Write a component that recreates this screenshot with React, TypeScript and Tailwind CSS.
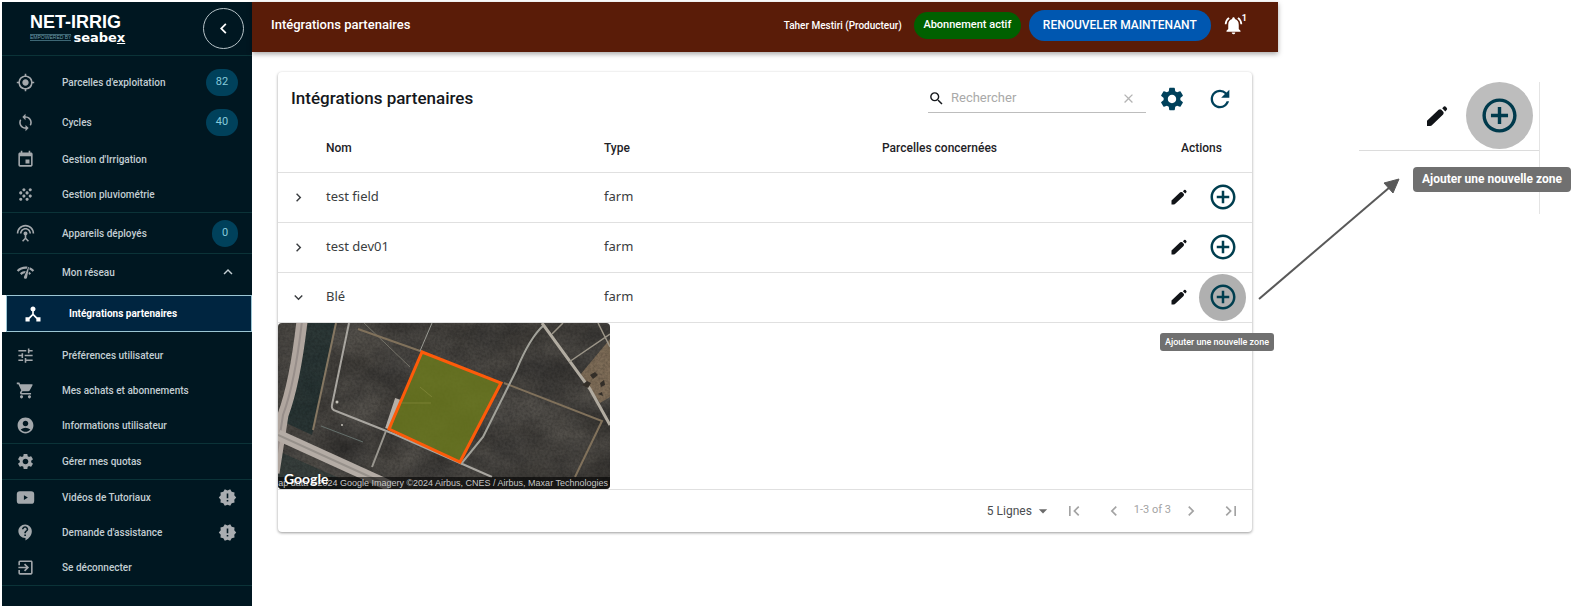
import type { ReactNode } from 'react';
import type { IconType } from 'react-icons';
import {
  MdGpsFixed, MdLoop, MdEvent, MdGrain, MdNetworkCheck, MdDeviceHub, MdTune, MdShoppingCart,
  MdAccountCircle, MdSettings, MdExitToApp, MdNewReleases, MdSearch, MdClose, MdRefresh,
  MdAddCircleOutline, MdChevronLeft, MdChevronRight, MdExpandMore, MdExpandLess, MdFirstPage,
  MdLastPage, MdArrowDropDown, MdNotificationsActive, MdContactSupport,
} from 'react-icons/md';

function AntennaIcon({ size = 20 }: { size?: number }) {
  return (
    <svg width={size} height={size} viewBox="0 0 24 24" fill="currentColor" aria-hidden="true">
      <path d="M12 5c-3.87 0-7 3.13-7 7h2c0-2.76 2.24-5 5-5s5 2.24 5 5h2c0-3.87-3.13-7-7-7zm1 9.29c.88-.39 1.5-1.26 1.5-2.29a2.5 2.5 0 0 0-5 0c0 1.02.62 1.9 1.5 2.29v3.3L7.59 21 9 22.41l3-3 3 3L16.41 21 13 17.59v-3.3zM12 1C5.93 1 1 5.93 1 12h2a9 9 0 0 1 18 0h2c0-6.07-4.93-11-11-11z" />
    </svg>
  );
}

function VideoIcon({ size = 20 }: { size?: number }) {
  return (
    <svg width={size} height={size} viewBox="0 0 24 24" fill="currentColor" fillRule="evenodd" aria-hidden="true">
      <path d="M5 4h14q4 0 4 4v8q0 4-4 4H5q-4 0-4-4V8q0-4 4-4zm5 5v6l5-3z" />
    </svg>
  );
}

function PencilIcon({ size }: { size: number }) {
  return (
    <svg width={size} height={size} viewBox="0 0 24 24" fill="#111418" aria-hidden="true">
      <path d="M2 22v-5.200L13.600 5.800q1.600-1.200 2.800 0l1.900 2q1 1.300-.2 2.800L7.400 20.800Q6.400 22 5 22zM17.200 4.200l1.700-1.600q1-.7 1.900.2l1 1.100q.8 1 0 1.800l-1.500 1.700z" />
    </svg>
  );
}

type Item = { label: string; icon: IconType | typeof AntennaIcon; badge?: string; extra?: ReactNode; height?: string };

const alertIcon = <MdNewReleases size={19} className="mr-[15px] text-[#a9adb1]" />;

const groups: Item[][] = [
  [
    { label: "Parcelles d'exploitation", icon: MdGpsFixed, badge: '82', height: 'h-10' },
    { label: 'Cycles', icon: MdLoop, badge: '40', height: 'h-10' },
    { label: "Gestion d'Irrigation", icon: MdEvent },
    { label: 'Gestion pluviométrie', icon: MdGrain },
  ],
  [{ label: 'Appareils déployés', icon: AntennaIcon, badge: '0', height: 'h-10' }],
];

const lowerGroups: Item[][] = [
  [
    { label: 'Préférences utilisateur', icon: MdTune },
    { label: 'Mes achats et abonnements', icon: MdShoppingCart },
    { label: 'Informations utilisateur', icon: MdAccountCircle },
  ],
  [{ label: 'Gérer mes quotas', icon: MdSettings }],
  [
    { label: 'Vidéos de Tutoriaux', icon: VideoIcon, extra: alertIcon },
    { label: "Demande d'assistance", icon: MdContactSupport, extra: alertIcon },
    { label: 'Se déconnecter', icon: MdExitToApp },
  ],
];

function NavItem({ item }: { item: Item }) {
  const Icon = item.icon;
  return (
    <li>
      <a href="#" className={`flex items-center pl-[14px] text-[10px] font-medium text-[#c3ced3] ${item.height ?? 'h-[35px]'}`}>
        <span className="w-[46px] text-[#a3a8ac]"><Icon size={19} /></span>
        <span className="flex-1">{item.label}</span>
        {item.badge && (
          <span className={`mr-[14px] flex h-[27px] items-center justify-center rounded-full bg-[#00415b] text-[11px] font-normal text-[#86cbdc] ${item.badge.length > 1 ? 'w-8' : 'w-[26px]'}`}>
            {item.badge}
          </span>
        )}
        {item.extra}
      </a>
    </li>
  );
}

function Sidebar() {
  return (
    <nav className="w-[250px] shrink-0 bg-[#001721]">
      <div className="flex h-[54px] items-center justify-between border-b border-[#0b3338] pr-2 pl-7">
        <div className="text-white">
          <div className="font-['Liberation_Sans',sans-serif] text-[18px] leading-[18px] font-bold">NET-IRRIG</div>
          <div className="flex items-center gap-[2px]">
            <span className="border-y border-[#3d6775] font-['Liberation_Sans',sans-serif] text-[5px] leading-[5px] whitespace-nowrap text-[#6f9dab]">EMPOWERED BY</span>
            <span className="font-['DejaVu_Sans',sans-serif] text-[13px] leading-[14px] font-bold">seabe<span className="underline">x</span></span>
          </div>
        </div>
        <button type="button" aria-label="Réduire le menu" className="flex size-[41px] items-center justify-center rounded-full border border-[#b7c3c8] text-white">
          <MdChevronLeft size={21} />
        </button>
      </div>
      <div className="pt-[6px]">
        {groups.map((g, i) => (
          <ul key={i} className="border-b border-[#0b3338]">
            {g.map((it) => <NavItem key={it.label} item={it} />)}
          </ul>
        ))}
        <button type="button" className="flex h-9 w-full items-center pr-[15px] pl-[14px] text-left text-[10px] font-medium text-[#c3ced3]">
          <span className="w-[46px] text-[#a3a8ac]"><MdNetworkCheck size={19} /></span>
          <span className="flex-1">Mon réseau</span>
          <MdExpandLess size={18} />
        </button>
        <div className="mt-[5px] mb-[6px] border-l-4 border-white">
          <a href="#" className="flex h-[37px] items-center border border-[#9cc6d4] bg-[#002540] pl-[16px] text-[10px] font-bold text-white">
            <span className="w-[46px]"><MdDeviceHub size={20} /></span>
            Intégrations partenaires
          </a>
        </div>
        {lowerGroups.map((g, i) => (
          <ul key={i} className="border-b border-[#0b3338]">
            {g.map((it) => <NavItem key={it.label} item={it} />)}
          </ul>
        ))}
      </div>
    </nav>
  );
}

function Header() {
  return (
    <header className="relative flex h-[50px] items-center bg-[#5a1c08] pr-[31px] pb-1 pl-[19px] text-white shadow-[0_2px_5px_rgba(0,0,0,0.35)]">
      <h1 className="flex-1 text-[13px] font-medium">Intégrations partenaires</h1>
      <span className="mr-3 text-[10px] font-medium">Taher Mestiri (Producteur)</span>
      <span className="mr-2 flex h-[27px] w-[107px] items-center justify-center rounded-full bg-[#006000] text-[11px] font-medium">Abonnement actif</span>
      <button type="button" className="mr-3 h-[31px] w-[182px] rounded-full bg-[#0057b0] text-[12px] font-medium">RENOUVELER MAINTENANT</button>
      <button type="button" aria-label="Notifications" className="flex items-end">
        <MdNotificationsActive size={21} />
        <span className="-ml-[2px] pb-[13px] text-[9px] leading-none font-bold">1</span>
      </button>
    </header>
  );
}

function FieldMap() {
  return (
    <figure className="relative w-[332px] overflow-hidden rounded">
      <svg viewBox="0 0 332 166" className="block h-[166px] w-full" role="img" aria-label="Vue satellite de la parcelle Blé">
        <defs>
          <filter id="ground" x="0" y="0" width="100%" height="100%" colorInterpolationFilters="sRGB">
            <feTurbulence type="fractalNoise" baseFrequency="0.02 0.03" numOctaves="6" seed="8" />
            <feColorMatrix values="0.16 0.1 0 0 0.14  0.15 0.1 0 0 0.135  0.13 0.1 0 0 0.13  0 0 0 0 1" />
          </filter>
          <filter id="grain" x="0" y="0" width="100%" height="100%" colorInterpolationFilters="sRGB">
            <feTurbulence type="fractalNoise" baseFrequency="0.4" numOctaves="2" seed="3" />
            <feColorMatrix values="0 0 0 0 0  0 0 0 0 0  0 0 0 0 0  0.6 0 0 0 -0.2" />
          </filter>
        </defs>
        <rect width="332" height="166" filter="url(#ground)" />
        <path d="M30 0h27L34 112 8 100z" fill="#142a2c" opacity=".6" />
        <path d="M0 128l86 38H0z" fill="#1d2f30" opacity=".5" />
        <path d="M332 16l-30 36 20 28 10-6z" fill="#8b765c" opacity=".8" />
        <rect width="332" height="166" filter="url(#grain)" opacity=".6" />
        <path d="M24-2Q17 60 5 92L-4 150" fill="none" stroke="#b0a69f" strokeWidth="11" />
        <path d="M24-2Q17 60 5 92L-4 150" fill="none" stroke="#978e8a" strokeWidth="2" />
        <path d="M0 112l112 51" fill="none" stroke="#b4aca5" strokeWidth="11" />
        <path d="M0 112l112 51" fill="none" stroke="#97918b" strokeWidth="2" />
        <path d="M58 0L35 107" stroke="#857762" strokeWidth="2" />
        <path d="M71 0L54 82q-1 5 4 6l58 23 98 43" fill="none" stroke="#a9a6a0" strokeWidth="2" />
        <path d="M86 0l46 44" stroke="#747269" strokeWidth="1" />
        <path d="M80 6l65 23M226 60l98 38-27 56" fill="none" stroke="#80715b" strokeWidth="2" />
        <path d="M154 0l-12 28" stroke="#999a93" strokeWidth="1" />
        <path d="M120 76l-10 30" fill="none" stroke="#b5afa8" strokeWidth="6" />
        <path d="M108 108l-14 36" fill="none" stroke="#9a9790" strokeWidth="2" />
        <path d="M266 2q-14 12-28 46l-33 66-22 27" fill="none" stroke="#a2a29a" strokeWidth="2" />
        <path d="M264 0l48 66 20 36" fill="none" stroke="#b2aca1" strokeWidth="3" />
        <path d="M274 11l11-11M291 39l41-28M320 0l12 24" fill="none" stroke="#9b9588" strokeWidth="1.500" />
        <g fill="#332e28"><path d="M304 62l5-4 4 2-3 5z" /><path d="M312 52l5-3 3 3-5 4zM322 60l4-3 1 5-4 2zM320 71l4-2 1 4z" /></g>
        <g fill="#c4c1b8"><circle cx="59" cy="79" r="1.500" /><circle cx="64" cy="102" r="1" /></g>
        <path d="M43 103l42 16" stroke="#65706c" strokeWidth="1" />
        <path d="M144 29l79 31-41 79-71-33z" fill="#6b7a1c" fillOpacity=".82" stroke="#fd5b0a" strokeWidth="3" />
        <path d="M123 80h30M142 64l12 10" stroke="#8b8e41" strokeWidth="1" opacity=".6" />
      </svg>
      <figcaption className="absolute inset-x-0 bottom-0 h-3 bg-black/60 font-['Liberation_Sans',sans-serif] text-[9px] leading-3 text-[#c6c6c6]">
        <span className="absolute right-[2px] whitespace-nowrap">Map data ©2024 Google Imagery ©2024 Airbus, CNES / Airbus, Maxar Technologies</span>
        <span className="absolute bottom-[2px] left-[6px] font-['Lato',sans-serif] text-[14px] leading-4 font-bold text-white">Google</span>
      </figcaption>
    </figure>
  );
}

const rows = [
  { name: 'test field', type: 'farm', open: false },
  { name: 'test dev01', type: 'farm', open: false },
  { name: 'Blé', type: 'farm', open: true },
];

function PartnersCard() {
  return (
    <section className="mx-[26px] mt-5 rounded bg-white shadow-[0_1px_3px_rgba(0,0,0,0.4)]">
      <div className="flex h-[53px] items-center pr-[18px] pl-[13px]">
        <h2 className="flex-1 text-[17px] font-medium text-[#15181c]">Intégrations partenaires</h2>
        <label className="mr-3 flex h-7 w-[218px] items-center border-b border-[#bdbdbd] pr-[10px]">
          <MdSearch size={17} className="text-[#15181c]" />
          <input type="text" aria-label="Rechercher" placeholder="Rechercher" className="ml-[6px] w-0 flex-1 text-[13px] outline-none placeholder:text-[#a9a9a9]" />
          <MdClose size={15} className="text-[#b4b4b4]" />
        </label>
        <button type="button" aria-label="Paramètres" className="mr-5 text-[#00415b]"><MdSettings size={28} /></button>
        <button type="button" aria-label="Actualiser" className="text-[#00415b]"><MdRefresh size={28} /></button>
      </div>
      <table className="w-full table-fixed border-collapse text-left text-[#1e2226]">
        <colgroup>
          <col className="w-12" /><col /><col /><col /><col className="w-[92px]" />
        </colgroup>
        <thead>
          <tr className="h-[47px] border-b border-[#e0e0e0] text-[12px]">
            <th aria-label="Détails" />
            <th className="font-medium">Nom</th>
            <th className="font-medium">Type</th>
            <th className="font-medium">Parcelles concernées</th>
            <th className="pl-[21px] font-medium">Actions</th>
          </tr>
        </thead>
        <tbody className="font-['Noto_Sans',sans-serif] text-[13px] text-[#3a3d40]">
          {rows.map((r) => (
            <tr key={r.name} className="h-[50px] border-b border-[#e0e0e0]">
              <td className="pl-3">
                <button type="button" aria-label={`Détails ${r.name}`} aria-expanded={r.open} className="block">
                  {r.open ? <MdExpandMore size={17} /> : <MdChevronRight size={17} />}
                </button>
              </td>
              <td>{r.name}</td>
              <td>{r.type}</td>
              <td />
              <td>
                <div className="relative flex items-center justify-end gap-[11px] pr-[6px]">
                  <button type="button" aria-label={`Modifier ${r.name}`}><PencilIcon size={18} /></button>
                  <button type="button" aria-label="Ajouter une nouvelle zone" className={`flex size-[47px] items-center justify-center rounded-full text-[#003e4f] ${r.open ? 'bg-[#b0b0b0]' : ''}`}>
                    <MdAddCircleOutline size={30} />
                  </button>
                  {r.open && (
                    <span role="tooltip" className="absolute top-[59px] -right-[22px] rounded-[3px] bg-[#707070] px-[5px] text-[9px] leading-[18px] font-medium whitespace-nowrap text-white font-['Roboto',sans-serif]">
                      Ajouter une nouvelle zone
                    </span>
                  )}
                </div>
              </td>
            </tr>
          ))}
          <tr className="border-b border-[#e0e0e0]">
            <td colSpan={5} className="p-0"><FieldMap /></td>
          </tr>
        </tbody>
      </table>
      <div className="flex h-[42px] items-center justify-end pr-[11px] text-[#a3a3a3]">
        <span className="relative mr-[11px] flex items-center text-[#4a4d50]">
          <select aria-label="Lignes par page" className="appearance-none pr-5 text-[12px] outline-none">
            <option>5 Lignes</option>
          </select>
          <MdArrowDropDown size={20} className="pointer-events-none absolute right-0 text-[#6b6b6b]" />
        </span>
        <button type="button" aria-label="Première page" className="mr-5"><MdFirstPage size={20} /></button>
        <button type="button" aria-label="Page précédente" className="mr-[10px]"><MdChevronLeft size={20} /></button>
        <span className="mr-[10px] text-[11px]">1-3 of 3</span>
        <button type="button" aria-label="Page suivante" className="mr-5"><MdChevronRight size={20} /></button>
        <button type="button" aria-label="Dernière page"><MdLastPage size={20} /></button>
      </div>
    </section>
  );
}

function Callout() {
  return (
    <aside className="relative w-[296px] shrink-0 pt-20 pl-[81px]">
      <div className="h-[132px] w-[181px] border-r border-[#e4e4e4]">
        <div className="flex h-[69px] items-center justify-end gap-[17px] border-b border-[#dcdcdc] pr-[6px] pb-px">
          <PencilIcon size={24} />
          <span className="flex size-[67px] items-center justify-center rounded-full bg-[#bdbdbd] text-[#003a4c]">
            <MdAddCircleOutline size={41} />
          </span>
        </div>
      </div>
      <span className="absolute top-[165px] right-[3px] rounded bg-[#707070] px-[9px] text-[12px] leading-[25px] font-bold whitespace-nowrap text-white">Ajouter une nouvelle zone</span>
      <svg className="absolute top-[174px] -left-5" width="144" height="126" viewBox="0 0 144 126" aria-hidden="true">
        <path d="M1 123L132 11" stroke="#595959" strokeWidth="2" />
        <path d="M141 3l-15 4 9 10z" fill="#595959" stroke="#595959" />
      </svg>
    </aside>
  );
}

export default function App() {
  return (
    <div className="flex min-h-screen bg-white pt-[2px] pl-[2px] font-['Roboto',sans-serif]">
      <Sidebar />
      <main className="min-w-0 flex-1">
        <Header />
        <PartnersCard />
      </main>
      <Callout />
    </div>
  );
}
